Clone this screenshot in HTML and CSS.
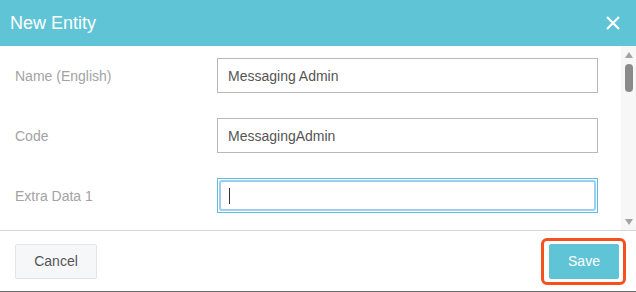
FILE: index.html
```html
<!DOCTYPE html>
<html>
	<head>
		<meta charset="utf-8"/>
		<title>New Entity</title>
		<meta name="viewport" content="width=device-width, initial-scale=1"/>
		<link rel="stylesheet" href="styles.css">
	</head>
	<body>
		<div class="modal">
			<div class="modal-header">
				<h1 class="modal-title">New Entity</h1>
				<button class="close-btn" type="button" aria-label="Close">
					<svg width="14" height="14" viewBox="0 0 14 14"><path d="M1 1L13 13M13 1L1 13" stroke="#fff" stroke-width="2.2" fill="none"/></svg>
				</button>
			</div>
			<div class="modal-body">
				<div class="form-list">
					<div class="form-row">
						<label class="form-label">Name (English)</label>
						<input class="input-box" type="text" value="Messaging Admin"/>
					</div>
					<div class="form-row">
						<label class="form-label">Code</label>
						<input class="input-box" type="text" value="MessagingAdmin"/>
					</div>
					<div class="form-row">
						<label class="form-label">Extra Data 1</label>
						<div class="focus-box">
							<input class="input-box input-focused" type="text" value=""/>
							<span class="caret"></span>
						</div>
					</div>
				</div>
				<div class="scrollbar">
					<span class="scroll-btn"><span class="arrow-up"></span></span>
					<div class="scroll-track"><span class="scroll-thumb"></span></div>
					<span class="scroll-btn scroll-btn-down"><span class="arrow-down"></span></span>
				</div>
			</div>
			<div class="modal-footer">
				<button class="btn btn-cancel" type="button">Cancel</button>
				<span class="highlight"><button class="btn btn-save" type="button">Save</button></span>
			</div>
		</div>
	</body>
</html>
```

FILE: styles.css
```css
body{margin: 0px;font-size: 14px;font-family: "Liberation Sans", Arial, sans-serif;background: #fff;}
.modal{display: flex;flex-direction: column;height: 292px;width: 636px;}
.modal-header{display: flex;align-items: center;justify-content: space-between;height: 46px;padding: 0 16px 0 10px;background: #5fc4d6;box-sizing: border-box;flex: none;}
.modal-title{margin: 0px;font-size: 18px;font-weight: normal;color: #fff;}
.close-btn{background: none;border: none;padding: 0;width: 14px;height: 14px;cursor: pointer;display: flex;}
.modal-body{height: 184px;display: flex;flex: none;overflow: hidden;}
.form-list{flex: 1;padding: 12px 23px 0 15px;}
.form-row{display: flex;align-items: center;margin-bottom: 25px;}
.form-label{width: 202px;flex: none;color: #a3a3a3;}
.input-box{flex: 1;height: 35px;box-sizing: border-box;border: 1px solid #b8b8b8;padding: 0 10px;font-family: inherit;font-size: 14px;color: #555;outline: none;min-width: 0;}
.focus-box{flex: 1;display: flex;position: relative;border: 1px solid #5bc0de;padding: 1px;height: 35px;box-sizing: border-box;}
.input-focused{border: 2px solid #9dcdf0;border-radius: 3px;height: 31px;padding: 0 8px;}
.caret{position: absolute;left: 11px;top: 9px;width: 1px;height: 16px;background: #333;}
.scrollbar{width: 15px;flex: none;display: flex;flex-direction: column;background: #f7f7f7;}
.scroll-btn{height: 16px;flex: none;display: flex;justify-content: center;padding-top: 6px;box-sizing: border-box;}
.scroll-btn-down{padding-top: 5px;}
.arrow-up{width: 0;height: 0;border-left: 4px solid transparent;border-right: 4px solid transparent;border-bottom: 6px solid #a3a3a3;}
.arrow-down{width: 0;height: 0;border-left: 4px solid transparent;border-right: 4px solid transparent;border-top: 6px solid #a3a3a3;}
.scroll-track{flex: 1;display: flex;justify-content: center;padding-top: 2px;}
.scroll-thumb{width: 8px;height: 28px;border-radius: 4px;background: #8a8a8a;}
.modal-footer{display: flex;align-items: center;justify-content: space-between;height: 62px;padding: 0 10px 0 15px;border-top: 1px solid #d6d6d6;border-bottom: 1px solid #6b6b6b;box-sizing: border-box;flex: none;}
.btn{height: 35px;border-radius: 2px;font-family: inherit;font-size: 14px;cursor: pointer;padding: 0;}
.btn-cancel{width: 82px;background: #f5f7f9;border: 1px solid #e2e5e8;color: #555;}
.btn-save{width: 70px;background: #5fc4d6;border: 1px solid #5fc4d6;color: #fff;display: block;}
.highlight{border: 3px solid #f4511e;border-radius: 6px;padding: 3px 4px 3px 5px;}
```
